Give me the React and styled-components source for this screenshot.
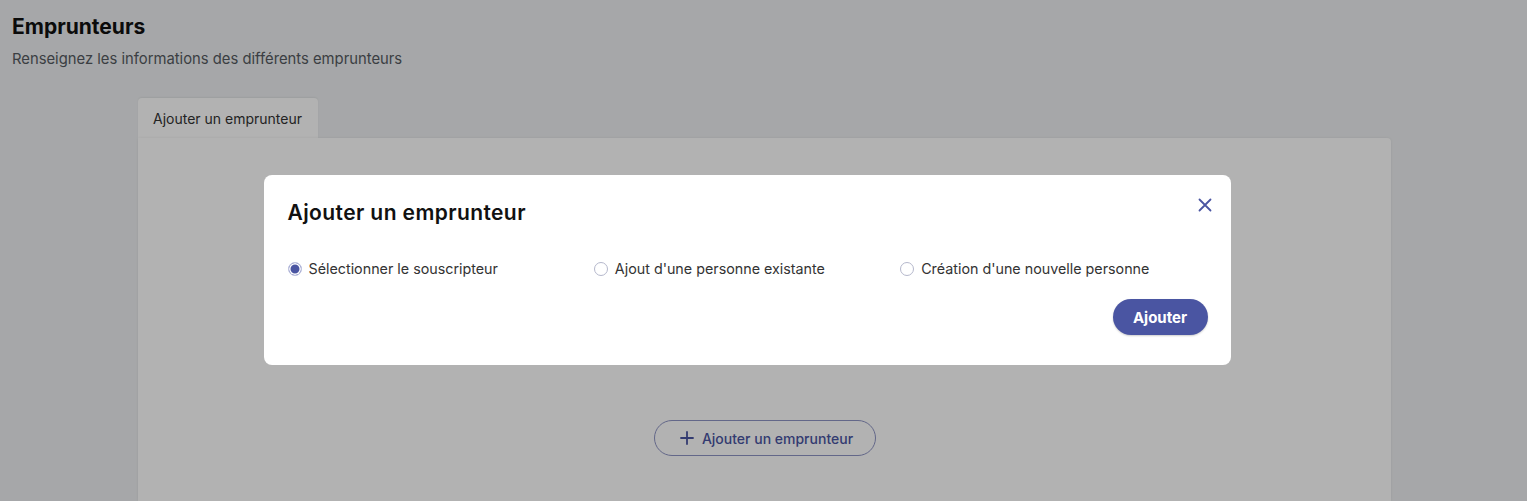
import React, { useState } from "react";
import styled, { createGlobalStyle } from "styled-components";

const GlobalStyle = createGlobalStyle`
  html, body {
    margin: 0;
    padding: 0;
    background: #eef0f2;
    font-family: "Inter", "Noto Sans", sans-serif;
    overflow: hidden;
  }
`;

const options = [
  { id: "sub", label: "Sélectionner le souscripteur" },
  { id: "existing", label: "Ajout d'une personne existante" },
  { id: "new", label: "Création d'une nouvelle personne" },
];

const App = () => {
  const [choice, setChoice] = useState("sub");

  return (
    <>
      <GlobalStyle />
      <Page>
        <Title>Emprunteurs</Title>
        <Subtitle>Renseignez les informations des différents emprunteurs</Subtitle>

        <TabsWrap>
          <TabBar>
            <Tab>Ajouter un emprunteur</Tab>
          </TabBar>
          <Card>
            <OutlineButton>
              <PlusIcon />
              Ajouter un emprunteur
            </OutlineButton>
          </Card>
        </TabsWrap>
      </Page>

      <Overlay>
        <Modal>
          <ModalHeader>
            <ModalTitle>Ajouter un emprunteur</ModalTitle>
            <CloseButton aria-label="Fermer">
              <svg width="14" height="14" viewBox="0 0 14 14">
                <path d="M1.5 1.5 L12.5 12.5 M12.5 1.5 L1.5 12.5" stroke="#4a55a2" strokeWidth="1.8" strokeLinecap="round" />
              </svg>
            </CloseButton>
          </ModalHeader>

          <RadioRow>
            {options.map((o) => (
              <RadioLabel key={o.id} onClick={() => setChoice(o.id)}>
                <RadioDot $checked={choice === o.id} />
                {o.label}
              </RadioLabel>
            ))}
          </RadioRow>

          <Footer>
            <PrimaryButton>Ajouter</PrimaryButton>
          </Footer>
        </Modal>
      </Overlay>
    </>
  );
};

const PlusIcon = () => (
  <svg width="14" height="14" viewBox="0 0 14 14">
    <path d="M7 1 V13 M1 7 H13" stroke="currentColor" strokeWidth="1.8" strokeLinecap="round" />
  </svg>
);

export default App;

// Styled Components

const Page = styled.div`
  height: 501px;
  padding: 14px 12px 0;
  box-sizing: border-box;
  display: flex;
  flex-direction: column;
`;

const Title = styled.h1`
  margin: 0;
  font-size: 21px;
  font-weight: 700;
  color: #111;
  line-height: 26px;
`;

const Subtitle = styled.p`
  margin: 7px 0 0;
  font-size: 14.8px;
  color: #555a60;
  line-height: 24px;
`;

const TabsWrap = styled.div`
  margin: 27px 0 0 126px;
  width: 1253px;
  display: flex;
  flex-direction: column;
  flex: 1;
`;

const TabBar = styled.div`
  display: flex;
`;

const Tab = styled.div`
  background: #fff;
  border-radius: 4px 4px 0 0;
  padding: 0 15px;
  height: 40px;
  width: 180px;
  box-sizing: border-box;
  display: flex;
  align-items: center;
  font-size: 14px;
  color: #333;
  box-shadow: 0 -1px 2px rgba(0, 0, 0, 0.06);
`;

const Card = styled.div`
  flex: 1;
  background: #fff;
  border-radius: 0 4px 0 0;
  box-shadow: 0 0 3px rgba(0, 0, 0, 0.08);
  display: flex;
  justify-content: center;
  align-items: flex-start;
  padding-top: 282px;
`;

const OutlineButton = styled.button`
  display: flex;
  align-items: center;
  gap: 8px;
  height: 36px;
  padding: 0 22px 0 25px;
  border: 1px solid #8e94c4;
  border-radius: 18px;
  background: #fff;
  color: #4a55a2;
  font-family: inherit;
  font-size: 14px;
  font-weight: 500;
  margin-left: 1px;
`;

const Overlay = styled.div`
  position: fixed;
  inset: 0;
  background: rgba(0, 0, 0, 0.3);
  display: flex;
  justify-content: center;
  align-items: flex-start;
  padding-top: 175px;
`;

const Modal = styled.div`
  width: 967px;
  height: 190px;
  box-sizing: border-box;
  background: #fff;
  border-radius: 8px;
  padding: 22px 24px 0;
  margin-left: -33px;
  display: flex;
  flex-direction: column;
`;

const ModalHeader = styled.div`
  display: flex;
  justify-content: space-between;
  align-items: flex-start;
`;

const ModalTitle = styled.h2`
  margin: 0;
  font-size: 21px;
  font-weight: 600;
  letter-spacing: 0.4px;
  line-height: 32px;
  color: #111;
`;

const CloseButton = styled.button`
  border: none;
  background: none;
  padding: 0;
  margin: 1px -5px 0 0;
  cursor: pointer;
  display: flex;
`;

const RadioRow = styled.div`
  display: grid;
  grid-template-columns: repeat(3, 1fr);
  margin-top: 30px;
`;

const RadioLabel = styled.label`
  display: flex;
  align-items: center;
  gap: 7px;
  font-size: 14.3px;
  color: #333;
  cursor: pointer;
  line-height: 20px;
`;

const RadioDot = styled.span`
  width: 14px;
  height: 14px;
  border-radius: 50%;
  box-sizing: border-box;
  border: 1px solid ${(p) => (p.$checked ? "#c2c6e2" : "#b5b8cc")};
  background: ${(p) => (p.$checked ? "#4a55a2" : "#fff")};
  box-shadow: ${(p) => (p.$checked ? "inset 0 0 0 1.5px #fff" : "none")};
  flex-shrink: 0;
`;

const Footer = styled.div`
  display: flex;
  justify-content: flex-end;
  margin-top: 20px;
`;

const PrimaryButton = styled.button`
  height: 36px;
  width: 95px;
  border: none;
  border-radius: 18px;
  background: #4a55a2;
  color: #fff;
  font-family: inherit;
  font-size: 15px;
  font-weight: 700;
  margin-right: -1px;
  box-shadow: 0 1px 2px rgba(0, 0, 0, 0.2);
`;
